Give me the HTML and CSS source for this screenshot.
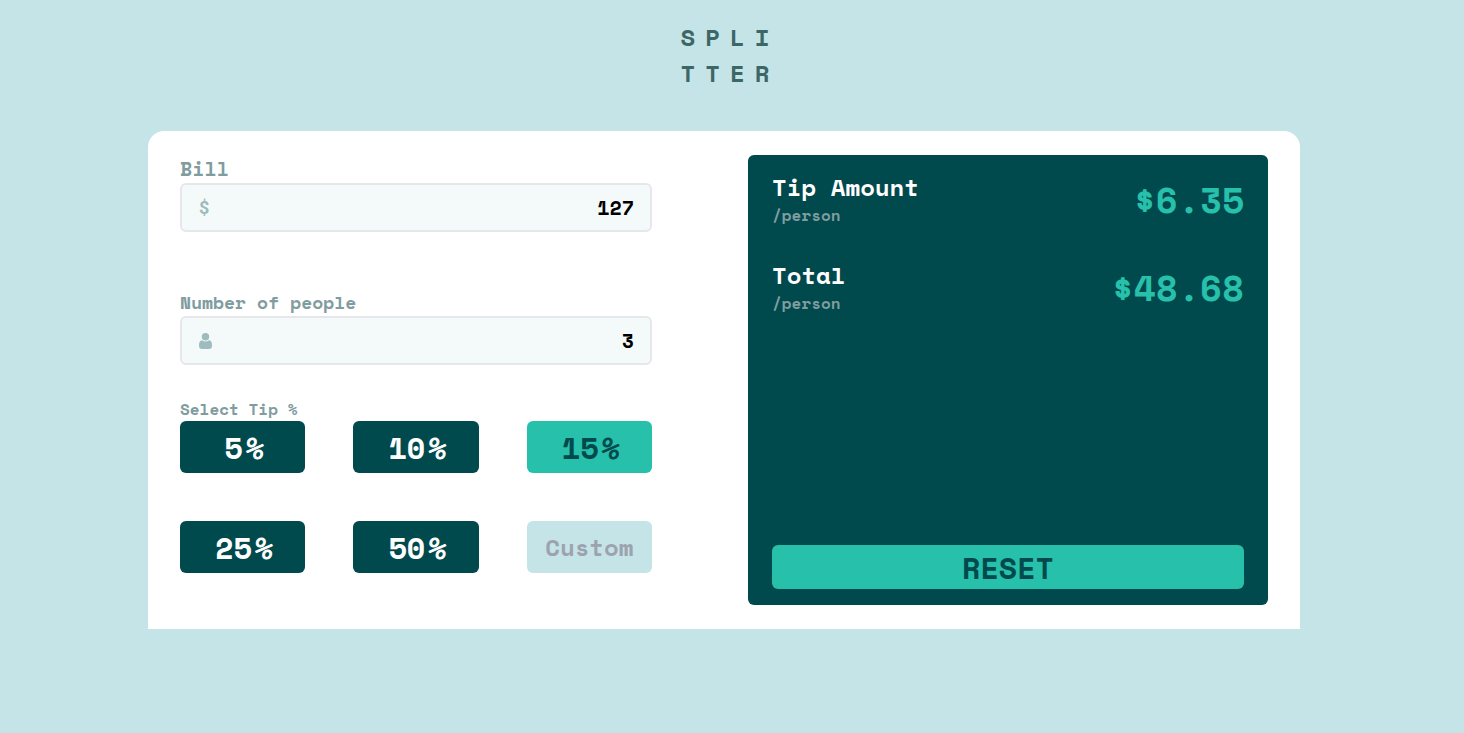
FILE: index.html
```html
<!DOCTYPE html>
<html lang="en">
<head>
<meta charset="utf-8">
<meta name="viewport" content="width=device-width, initial-scale=1">
<title>Splitter</title>
<link rel="stylesheet" href="styles.css">
</head>
<body>
<header class="header">
  <h1 class="logo">SPLI<br>TTER</h1>
</header>
<main class="card">
  <form class="form">
    <div class="field">
      <label class="label label-bill" for="bill">Bill</label>
      <div class="input-wrap">
        <span class="icon dollar" aria-hidden="true">$</span>
        <input class="input" id="bill" type="text" inputmode="decimal" value="127">
      </div>
    </div>
    <div class="field">
      <label class="label label-people" for="people">Number of people</label>
      <div class="input-wrap">
        <svg class="icon" width="13" height="16" viewBox="0 0 13 16" aria-hidden="true">
          <circle cx="6.5" cy="3.7" r="3.7" fill="#9ebbbd"/>
          <path d="M3 7.300C4 8.100 5.200 8.500 6.500 8.500S9 8.100 10 7.300C12 7.500 13 9.300 13 12.500C13 15 12 16 10 16H3C1 16 0 15 0 12.500C0 9.300 1 7.500 3 7.300Z" fill="#9ebbbd"/>
        </svg>
        <input class="input" id="people" type="text" inputmode="numeric" value="3">
      </div>
    </div>
    <div class="tips" role="group" aria-labelledby="tip-label">
      <span class="label label-tip" id="tip-label">Select Tip %</span>
      <div class="tip-grid">
        <button class="tip" type="button">5<span class="percent">%</span></button>
        <button class="tip" type="button">10<span class="percent">%</span></button>
        <button class="tip tip-active" type="button" aria-pressed="true">15<span class="percent">%</span></button>
        <button class="tip" type="button">25<span class="percent">%</span></button>
        <button class="tip" type="button">50<span class="percent">%</span></button>
        <input class="tip tip-custom" type="text" placeholder="Custom" aria-label="Custom tip">
      </div>
    </div>
  </form>
  <section class="panel">
    <div class="result">
      <div>
        <h2 class="result-title">Tip Amount</h2>
        <p class="result-unit">/person</p>
      </div>
      <output class="amount">$6.35</output>
    </div>
    <div class="result">
      <div>
        <h2 class="result-title">Total</h2>
        <p class="result-unit">/person</p>
      </div>
      <output class="amount">$48.68</output>
    </div>
    <button class="reset" type="button">RESET</button>
  </section>
</main>
</body>
</html>
```

FILE: styles.css
```css
*, *::before, *::after { box-sizing: border-box; }

body {
  margin: 0;
  padding: 19px 16px 24px 0;
  min-height: 100vh;
  background: #c5e4e7;
  color: #00494d;
  font-family: "Space Mono", "DejaVu Sans Mono", monospace;
  font-weight: 700;
}

h1, h2, p { margin: 0; }
button, input { font: inherit; }

.header { display: flex; justify-content: center; }

.logo {
  padding-left: 12px;
  color: #3d6666;
  font-size: 24px;
  line-height: 36px;
  letter-spacing: 10px;
}

.card {
  display: grid;
  grid-template-columns: 1fr 1fr;
  gap: 48px;
  max-width: 1152px;
  margin: 40px auto 0;
  padding: 24px 32px;
  background: #fff;
  border-radius: 16px 16px 0 0;
}

.form {
  display: flex;
  flex-direction: column;
  padding: 0 48px 32px 0;
}

.field { margin-bottom: 56px; }
.field + .field { margin-bottom: 36px; }

.label { display: block; color: #7f9c9f; line-height: 28px; }
.label-bill { font-size: 20px; }
.label-people { font-size: 18px; }
.label-tip { margin-bottom: 4px; font-size: 16px; line-height: 16px; }

.input-wrap {
  display: flex;
  align-items: center;
  height: 49px;
  padding: 0 16px;
  background: #f4fafa;
  border: 2px solid #e5e7eb;
  border-radius: 6px;
}

.icon { flex: none; margin-left: 1px; }
.dollar { color: #9ebbbd; font-family: Roboto, sans-serif; font-size: 18px; font-weight: 700; }

.input {
  flex: 1;
  min-width: 0;
  padding: 0;
  border: 0;
  outline: 0;
  background: transparent;
  color: #000;
  font-size: 20px;
  text-align: right;
}

.tip-grid {
  display: grid;
  grid-template-columns: repeat(3, 1fr);
  gap: 48px;
}

.tip {
  min-width: 0;
  width: 100%;
  height: 52px;
  padding: 0;
  border: 0;
  border-radius: 6px;
  background: #00494d;
  color: #fff;
  font-size: 30px;
  text-align: center;
}
.percent {
  margin: 0 -3px 0 3px;
  font-style: italic;
  font-weight: 400;
  -webkit-text-stroke: 1px currentColor;
}
.tip-active { background: #26c0ab; color: #00494d; }
.tip-custom { background: #c5e4e7; font-size: 24px; }
.tip-custom::placeholder { color: #9ca3af; opacity: 1; }

.panel {
  display: flex;
  flex-direction: column;
  gap: 36px;
  min-height: 450px;
  padding: 20px 24px 16px;
  background: #00494d;
  border-radius: 6px;
}

.result {
  display: flex;
  justify-content: space-between;
  align-items: flex-start;
}
.result-title { color: #fff; font-size: 24px; line-height: 24px; }
.result-unit { margin-top: 4px; color: #7f9c9f; font-size: 16px; line-height: 24px; }
.amount { color: #26c0ab; font-size: 36px; line-height: 50px; }

.reset {
  margin-top: auto;
  height: 44px;
  padding: 0;
  border: 0;
  border-radius: 6px;
  background: #26c0ab;
  color: #00494d;
  font-size: 30px;
}
```
